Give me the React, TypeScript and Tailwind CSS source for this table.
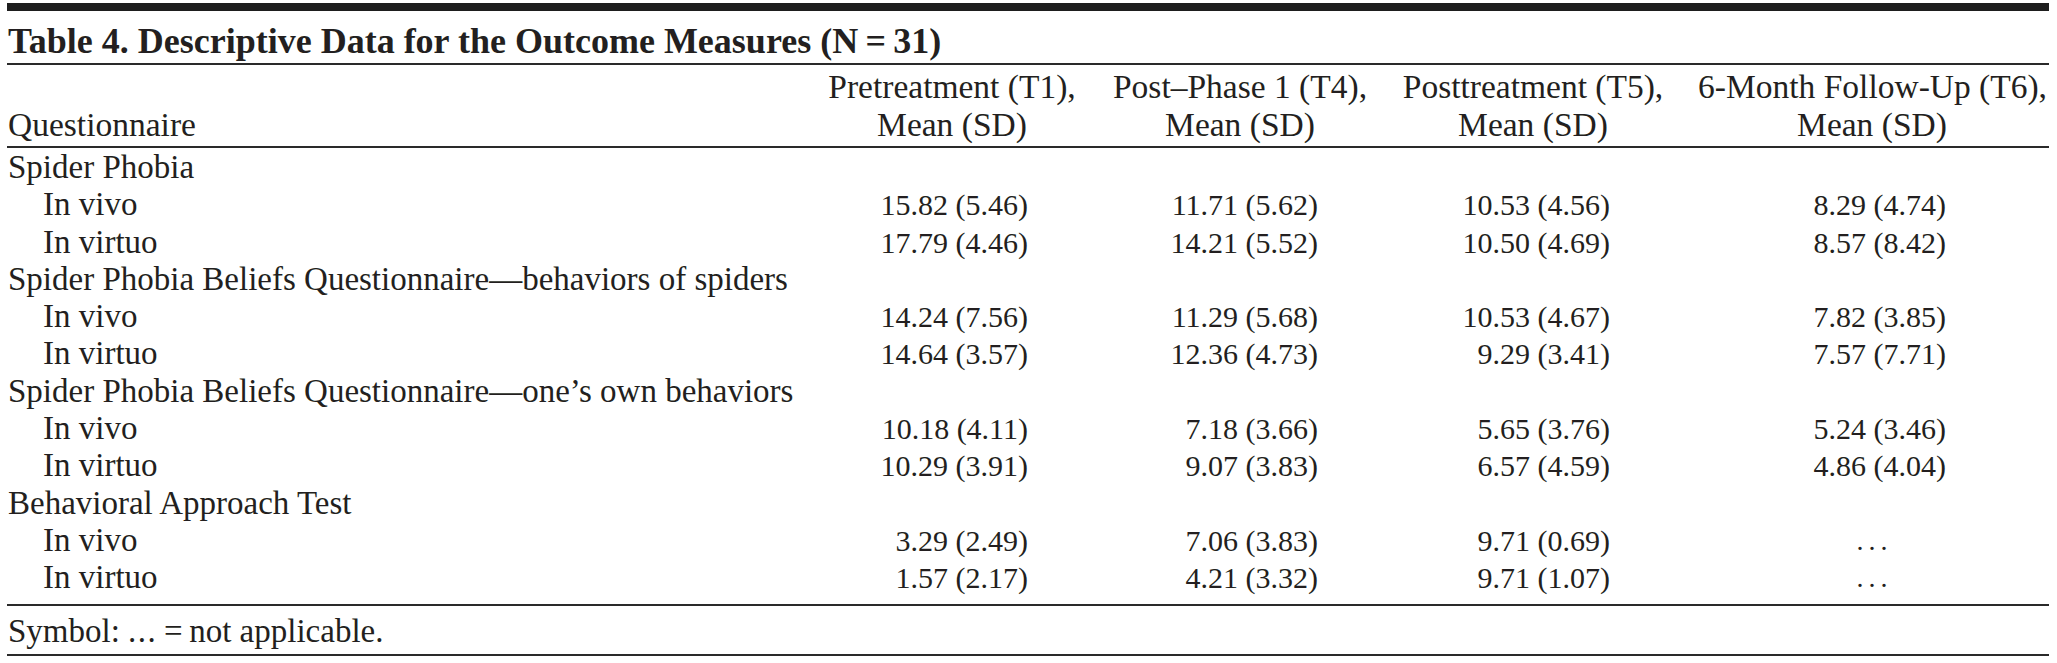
import React from 'react'

type Row = { label: string; sub?: boolean; vals?: string[] }

const rows: Row[] = [
    { label: 'Spider Phobia' },
    { label: 'In vivo', sub: true, vals: ['15.82 (5.46)', '11.71 (5.62)', '10.53 (4.56)', '8.29 (4.74)'] },
    { label: 'In virtuo', sub: true, vals: ['17.79 (4.46)', '14.21 (5.52)', '10.50 (4.69)', '8.57 (8.42)'] },
    { label: 'Spider Phobia Beliefs Questionnaire\u2014behaviors of spiders' },
    { label: 'In vivo', sub: true, vals: ['14.24 (7.56)', '11.29 (5.68)', '10.53 (4.67)', '7.82 (3.85)'] },
    { label: 'In virtuo', sub: true, vals: ['14.64 (3.57)', '12.36 (4.73)', '9.29 (3.41)', '7.57 (7.71)'] },
    { label: 'Spider Phobia Beliefs Questionnaire\u2014one\u2019s own behaviors' },
    { label: 'In vivo', sub: true, vals: ['10.18 (4.11)', '7.18 (3.66)', '5.65 (3.76)', '5.24 (3.46)'] },
    { label: 'In virtuo', sub: true, vals: ['10.29 (3.91)', '9.07 (3.83)', '6.57 (4.59)', '4.86 (4.04)'] },
    { label: 'Behavioral Approach Test' },
    { label: 'In vivo', sub: true, vals: ['3.29 (2.49)', '7.06 (3.83)', '9.71 (0.69)', '...'] },
    { label: 'In virtuo', sub: true, vals: ['1.57 (2.17)', '4.21 (3.32)', '9.71 (1.07)', '...'] },
]

const cols = 'grid grid-cols-[788px_314px_262px_324px_354px]'
// right padding so each figure column ends where the printed one does
const pads = ['pr-[81px]', 'pr-[53px]', 'pr-[85px]', 'pr-[103px]']

function Cell({ v, j }: { v?: string; j: number }) {
    if (!v) return <div />
    if (v === '...') {
        return <div className="text-center text-[28px] tracking-[5px] pl-[5px]">...</div>
    }
    return <div className={`flex justify-end text-[30px] ${pads[j]}`}>{v}</div>
}

export default function App() {
    return (
        <div className="bg-white w-[2057px] h-[663px] pl-[7px] pt-[3px] text-[#231f20]" style={{ fontFamily: '"Liberation Serif", "Times New Roman", serif' }}>
            <div className="w-[2042px]">
                <div className="h-[8px] bg-[#1e1e1e]" />
                <div className="h-[52px] pt-[10px] pl-[1px] leading-[40px] text-[36px] font-semibold whitespace-nowrap">
                    Table 4. Descriptive Data for the Outcome Measures (N{'\u2009'}={'\u2009'}31)
                </div>
                <div className="h-[2px] bg-[#2a2a2a]" />

                {/* column headings */}
                <div className={`${cols} h-[81px] pt-[3px] text-[33.5px] leading-[37.5px]`}>
                    <div className="pl-[1px] pt-[37.5px]">Questionnaire</div>
                    <div className="text-center whitespace-nowrap">Pretreatment (T1),<br />Mean (SD)</div>
                    <div className="text-center whitespace-nowrap">Post{'\u2013'}Phase 1 (T4),<br />Mean (SD)</div>
                    <div className="text-center whitespace-nowrap">Posttreatment (T5),<br />Mean (SD)</div>
                    <div className="whitespace-nowrap">
                        <div className="flex justify-end pr-[2px]">6-Month Follow-Up (T6),</div>
                        <div className="text-center">Mean (SD)</div>
                    </div>
                </div>
                <div className="h-[2px] bg-[#2a2a2a]" />

                <div className="pt-[1px] pb-[7px]">
                    {rows.map((r, i) => (
                        <div key={i} className={`${cols} h-[37.3px] leading-[37.3px] whitespace-nowrap`}>
                            <div className={`text-[33px] ${r.sub ? 'pl-[36px]' : 'pl-[1px]'}`}>{r.label}</div>
                            {[0, 1, 2, 3].map(j => <Cell key={j} j={j} v={r.vals?.[j]} />)}
                        </div>
                    ))}
                </div>
                <div className="h-[2px] bg-[#2a2a2a]" />

                <div className="h-[48px] pt-[10px] pl-[1px] text-[33px] leading-[30px] whitespace-nowrap">
                    Symbol: <span className="tracking-[1.5px]">...</span>{'\u2009'}={'\u2009'}not applicable.
                </div>
                <div className="h-[2px] bg-[#2a2a2a]" />
            </div>
        </div>
    )
}
